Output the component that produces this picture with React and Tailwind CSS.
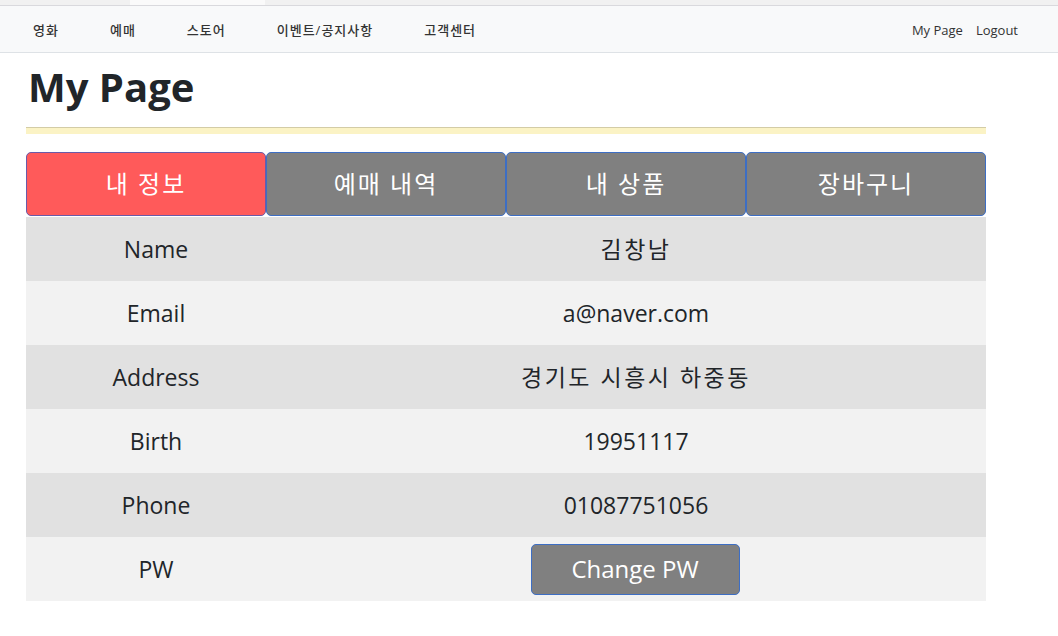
import React from 'react';

const font = { fontFamily: '"Open Sans", "Noto Sans", "Noto Sans CJK KR", sans-serif' };

const rows = [
  { label: 'Name', value: '김창남', ko: true },
  { label: 'Email', value: 'a@naver.com' },
  { label: 'Address', value: '경기도 시흥시 하중동', ko: true },
  { label: 'Birth', value: '19951117' },
  { label: 'Phone', value: '01087751056' },
];

const tabs = ['내 정보', '예매 내역', '내 상품', '장바구니'];

export default function App() {
  return (
    <div className="min-h-[636px] bg-white text-[#212529]" style={font}>
      {/* 상단 띠 */}
      <div className="h-[6px] bg-[#f1f1f1] border-b border-[#d9d9dd] flex">
        <div className="ml-[130px] w-[135px] bg-[#fafafa]" />
      </div>

      {/* 네비게이션 */}
      <nav className="h-[47px] bg-[#f8f9fa] border-b border-[#dee2e6] flex items-center justify-between pl-[33px] pr-[40px] pt-[3px]">
        <ul className="flex gap-[51px] text-[13px] font-medium tracking-[1px] text-[#333]">
          <li>영화</li>
          <li>예매</li>
          <li>스토어</li>
          <li>이벤트/공지사항</li>
          <li>고객센터</li>
        </ul>
        <div className="flex gap-[13px] text-[13px] text-[#333]">
          <span>My Page</span>
          <span>Logout</span>
        </div>
      </nav>

      <div className="pl-[26px] w-[986px]">
        <h1 className="text-[40px] font-bold leading-none pt-[14px] pl-[2px] pb-[20px]">My Page</h1>
        <div className="h-[7px] border-t border-[#d3cca6] bg-[#fbf3c5]" />

        {/* 탭 */}
        <div className="grid grid-cols-4 mt-[18px]">
          {tabs.map((t, i) => (
            <button
              key={t}
              className={`h-[64px] rounded-[5px] border text-white text-[24px] tracking-[2px] ${
                i === 0 ? 'bg-[#ff5a5a] border-[#6a5aa8]' : 'bg-[#808080] border-[#3d6ec4]'
              }`}
            >
              {t}
            </button>
          ))}
        </div>

        {/* 회원 정보 */}
        <div className="mt-[1px] text-[23px]">
          {rows.map((r, i) => (
            <div
              key={r.label}
              className={`h-[64px] flex items-center ${i % 2 === 0 ? 'bg-[#e1e1e1]' : 'bg-[#f2f2f2]'}`}
            >
              <div className="w-[260px] text-center">{r.label}</div>
              <div className={`flex-1 text-center ${r.ko ? 'tracking-[2.5px]' : ''}`}>{r.value}</div>
            </div>
          ))}
          <div className="h-[64px] flex items-center bg-[#f2f2f2]">
            <div className="w-[260px] text-center">PW</div>
            <div className="flex-1 flex justify-center">
              <button className="w-[209px] h-[51px] ml-[-2px] rounded-[5px] border border-[#3d6ec4] bg-[#808080] text-white text-[24px]">
                Change PW
              </button>
            </div>
          </div>
        </div>
      </div>
    </div>
  );
}
